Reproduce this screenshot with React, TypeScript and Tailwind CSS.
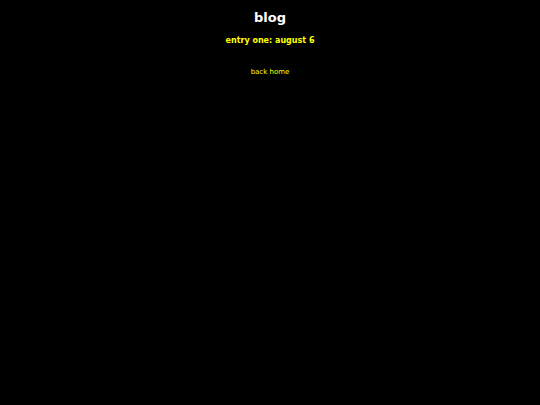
export default function App() {
  return (
    <div className="min-h-[405px] w-full bg-black text-center" style={{ fontFamily: '"DejaVu Sans", Verdana, sans-serif' }}>
      <h1 className="pt-[10px] text-[13px] font-bold leading-[16px] text-white">blog</h1>
      <h3 className="mt-[10px] text-[8px] font-bold leading-[10px] text-[#ffff00]">entry one: august 6</h3>
      <p className="mt-[22px] text-[7px] leading-[9px]">
        <a href="#" className="text-[#ffff00]">back home</a>
      </p>
    </div>
  );
}
